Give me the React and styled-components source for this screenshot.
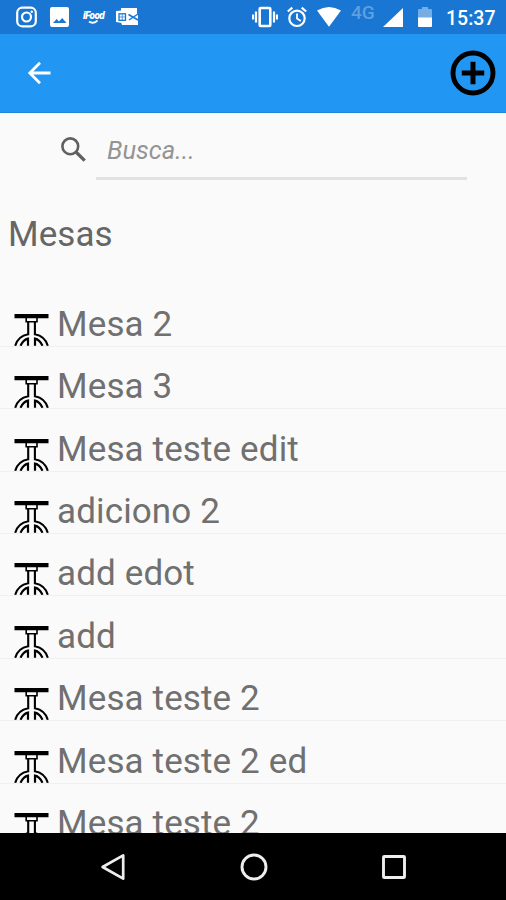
import React from "react";
import styled, { createGlobalStyle } from "styled-components";

const tables = [
  "Mesa 2",
  "Mesa 3",
  "Mesa teste edit",
  "adiciono 2",
  "add edot",
  "add",
  "Mesa teste 2",
  "Mesa teste 2 ed",
  "Mesa teste 2",
];

function TableIcon() {
  return (
    <svg width="35" height="33" viewBox="0 0 35 33" fill="none" stroke="#000">
      <path d="M.5 3.200h34" strokeWidth="4.200" />
      <path d="M12.200 5v3.700h10.800V5" strokeWidth="1.600" />
      <path
        d="M14.200 9v12.300C8 22.500 3 26.500 1.200 32.800M20.900 9v12.300C27 22.500 32 26.500 33.800 32.800"
        strokeWidth="2.100"
      />
      <path
        d="M6.500 32.800C8.300 29 11 26.300 14 25.700V32.800M28.500 32.800C26.700 29 24 26.300 21 25.700V32.800"
        strokeWidth="2.200"
      />
    </svg>
  );
}

function StatusBar() {
  return (
    <StatusBarStyled>
      <StatusIcon $left={16} $width={21}>
        <svg width="21" height="22" viewBox="0 0 21 22" fill="none" stroke="#fff">
          <rect x="1.200" y="1.700" width="18.600" height="18.600" rx="5" strokeWidth="2.200" />
          <circle cx="10.500" cy="11" r="4.500" strokeWidth="2.200" />
          <circle cx="15.800" cy="5.800" r="1.200" fill="#fff" stroke="none" />
        </svg>
      </StatusIcon>
      <StatusIcon $left={13} $width={19}>
        <svg width="19" height="22" viewBox="0 0 19 22">
          <path
            fill="#fff"
            fillRule="evenodd"
            d="M2 1h15a2 2 0 0 1 2 2v16a2 2 0 0 1-2 2H2a2 2 0 0 1-2-2V3a2 2 0 0 1 2-2zM3 17h13.500l-4.300-5-3.200 3.500-2.300-2.500z"
          />
        </svg>
      </StatusIcon>
      <StatusIcon $left={13} $width={23}>
        <FoodBadge>
          <span>iFood</span>
          <svg width="11" height="4" viewBox="0 0 11 4" fill="none" stroke="#fff">
            <path d="M1 1.500Q5 4.500 9.500.5" strokeWidth="1.800" />
          </svg>
        </FoodBadge>
      </StatusIcon>
      <StatusIcon $left={11} $width={23}>
        <svg width="23" height="22" viewBox="0 0 23 22">
          <path fill="#fff" d="M5 2h16v6l-7 3.500 8-4v11.500H6l-1-3z" />
          <path fill="#fff" d="M0 5l12-1v14L0 16z" />
          <path d="M12.500 8.500l9.500 5.500M13 14l9-6" stroke="#1976d2" strokeWidth="1.500" />
          <rect x="3" y="7.800" width="6.500" height="6.500" fill="none" stroke="#1976d2" strokeWidth="1.300" />
          <path d="M6.200 8v6M3 11h6" stroke="#1976d2" strokeWidth=".7" />
        </svg>
      </StatusIcon>

      <StatusIcon $left={113} $width={26}>
        <svg width="26" height="22" viewBox="0 0 26 22" fill="none" stroke="#fff" strokeWidth="2.200">
          <rect x="7.700" y="2" width="10.600" height="18" rx="1" strokeWidth="2.600" />
          <path d="M4 5.500v11M22 5.500v11M1 8.500v5M25 8.500v5" />
        </svg>
      </StatusIcon>
      <StatusIcon $left={9} $width={20}>
        <svg width="20" height="22" viewBox="0 0 20 22" fill="none" stroke="#fff" strokeWidth="2.200">
          <circle cx="10" cy="12.300" r="7.700" />
          <path d="M.8 5.500l4.500-3.800M19.200 5.500l-4.500-3.800" />
          <path d="M10 7.500v5l3.800 2.500" strokeWidth="1.800" />
        </svg>
      </StatusIcon>
      <StatusIcon $left={10} $width={24}>
        <svg width="24" height="22" viewBox="0 0 24 22">
          <path fill="#fff" d="M0 4.500Q12-2.500 24 4.500L12 20.800z" />
        </svg>
      </StatusIcon>
      <Network>4G</Network>
      <StatusIcon $left={6} $width={20}>
        <svg width="20" height="22" viewBox="0 0 20 22">
          <path fill="#fff" d="M20 2v19H0z" />
        </svg>
      </StatusIcon>
      <StatusIcon $left={15} $width={14}>
        <svg width="14" height="22" viewBox="0 0 14 22">
          <path fill="#75ade4" d="M4 1h6v2h3a1 1 0 0 1 1 1v8H0V4a1 1 0 0 1 1-1h3z" />
          <path fill="#fff" d="M0 11.500h14V20a1 1 0 0 1-1 1H1a1 1 0 0 1-1-1z" />
        </svg>
      </StatusIcon>
      <Clock>15:37</Clock>
    </StatusBarStyled>
  );
}

export default function App() {
  return (
    <Screen>
      <GlobalStyle />
      <StatusBar />
      <Toolbar>
        <IconButton aria-label="Voltar">
          <svg width="24" height="24" viewBox="0 0 24 24" fill="none" stroke="#fff" strokeWidth="2.800">
            <path d="M23.500 12H3M13 1.800L2.800 12 13 22.200" />
          </svg>
        </IconButton>
        <IconButton aria-label="Adicionar">
          <svg width="46" height="46" viewBox="0 0 46 46" fill="none" stroke="#000">
            <circle cx="23" cy="23" r="20" strokeWidth="4.900" />
            <path d="M23 11.800v22.400M11.800 23h22.400" strokeWidth="5" />
          </svg>
        </IconButton>
      </Toolbar>
      <Search>
        <svg width="26" height="26" viewBox="0 0 26 26" fill="none" stroke="#606060">
          <circle cx="9.300" cy="9.300" r="7.900" strokeWidth="2.600" />
          <path d="M15 15l8.700 8.700" strokeWidth="3.300" />
        </svg>
        <SearchInput placeholder="Busca..." />
      </Search>
      <Title>Mesas</Title>
      <List>
        {tables.map((name, i) => (
          <Row key={i}>
            <TableIcon />
            <RowName>{name}</RowName>
          </Row>
        ))}
      </List>
      <NavBar>
        <svg width="26" height="28" viewBox="0 0 26 28" fill="none" stroke="#eee" strokeWidth="2.700">
          <path d="M23.200 2.300v23.400L2.600 14z" strokeLinejoin="round" />
        </svg>
        <svg width="28" height="28" viewBox="0 0 28 28" fill="none" stroke="#eee" strokeWidth="2.900">
          <circle cx="14" cy="14" r="12" />
        </svg>
        <svg width="26" height="26" viewBox="0 0 26 26" fill="none" stroke="#eee" strokeWidth="2.900">
          <rect x="2.500" y="2.500" width="21" height="21" rx=".8" />
        </svg>
      </NavBar>
    </Screen>
  );
}

const GlobalStyle = createGlobalStyle`
  * {
    box-sizing: border-box;
  }
  body {
    margin: 0;
    font-family: Roboto, "Liberation Sans", sans-serif;
  }
  svg {
    display: block;
    flex-shrink: 0;
  }
`;

const Screen = styled.div`
  display: flex;
  flex-direction: column;
  width: 506px;
  height: 900px;
  overflow: hidden;
  background: #fafafa;
`;

const StatusBarStyled = styled.div`
  display: flex;
  align-items: center;
  flex-shrink: 0;
  height: 34px;
  background: #1976d2;
  color: #fff;
`;

const StatusIcon = styled.div`
  flex-shrink: 0;
  width: ${({ $width }) => $width}px;
  margin-left: ${({ $left }) => $left}px;
`;

const FoodBadge = styled.div`
  display: flex;
  flex-direction: column;
  align-items: center;
  font-size: 10px;
  font-style: italic;
  font-weight: 900;
  line-height: 9px;
  letter-spacing: -0.6px;
`;

const Network = styled.span`
  width: 26px;
  margin-left: 10px;
  padding-bottom: 8px;
  font-size: 19px;
  font-weight: 500;
  line-height: 18px;
  color: #5e9fdf;
`;

const Clock = styled.span`
  margin-left: 14px;
  padding-top: 3px;
  font-size: 19.500px;
  font-weight: 500;
  line-height: 22px;
`;

const Toolbar = styled.header`
  display: flex;
  align-items: center;
  justify-content: space-between;
  flex-shrink: 0;
  height: 79px;
  padding: 0 10px 0 27px;
  background: #2196f3;
  border-bottom: 1px solid #1f86dc;
`;

const IconButton = styled.button`
  padding: 0;
  border: 0;
  background: none;
`;

const Search = styled.div`
  display: flex;
  align-items: flex-start;
  flex-shrink: 0;
  height: 67px;
  margin: 0 39px 0 61px;
  padding-top: 24px;

  svg {
    margin-right: 9px;
  }
`;

const SearchInput = styled.input`
  flex: 1;
  min-width: 0;
  height: 43px;
  padding: 0 0 15px 11px;
  border: 0;
  border-bottom: 3px solid #e2e2e2;
  outline: 0;
  background: none;
  font-family: inherit;
  font-size: 25.500px;
  font-style: italic;

  &::placeholder {
    color: #949494;
    opacity: 1;
  }
`;

const Title = styled.h1`
  flex-shrink: 0;
  height: 104.500px;
  margin: 0;
  padding: 35px 0 0 8px;
  font-size: 35px;
  font-weight: 400;
  line-height: 40px;
  letter-spacing: 0.1px;
  color: #666;
`;

const List = styled.ul`
  flex: 1;
  min-height: 0;
  margin: 0;
  padding: 0;
  overflow: hidden;
  list-style: none;
`;

const Row = styled.li`
  display: flex;
  align-items: flex-end;
  height: 62.400px;
  padding-left: 14px;
  border-bottom: 1px solid #f0f0f0;
`;

const RowName = styled.span`
  margin-left: 8px;
  padding-bottom: 1px;
  font-size: 35px;
  line-height: 40px;
  letter-spacing: 0.130px;
  color: #707070;
`;

const NavBar = styled.nav`
  display: flex;
  align-items: center;
  justify-content: space-between;
  flex-shrink: 0;
  height: 67px;
  padding: 0 99px 0 100px;
  background: #000;
`;
